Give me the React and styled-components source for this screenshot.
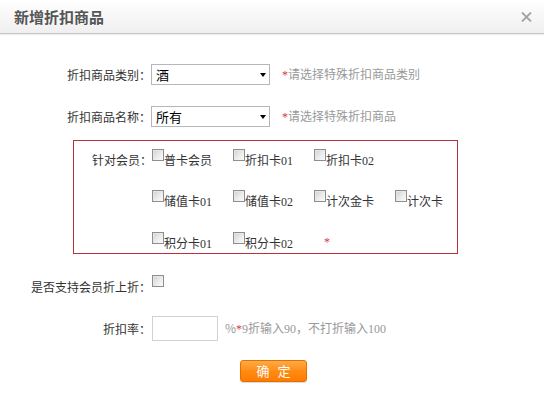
import React from 'react';
import styled, { createGlobalStyle } from 'styled-components';

const GlobalStyle = createGlobalStyle`
  html, body {
    margin: 0;
    padding: 0;
    background: #fff;
  }
  body {
    font-family: "Liberation Serif", "Noto Sans CJK SC", serif;
    font-size: 12px;
    color: #333;
  }
`;

const Dialog = styled.div`
  width: 544px;
  height: 411px;
  background: #fff;
  display: flex;
  flex-direction: column;
`;

const Header = styled.div`
  height: 34px;
  box-sizing: border-box;
  display: flex;
  align-items: center;
  justify-content: space-between;
  padding: 0 12px 0 14px;
  background: linear-gradient(#ffffff, #efefef);
  border-bottom: 1px solid #c8c8c8;
  box-shadow: 0 1px 0 #ededed;
`;

const Title = styled.h1`
  margin: 0;
  font-family: "Noto Sans CJK SC", sans-serif;
  font-size: 15px;
  font-weight: bold;
  line-height: 1;
  color: #555;
`;

const CloseButton = styled.button`
  border: 0;
  padding: 0;
  background: none;
  display: flex;
  cursor: pointer;
`;

const Row = styled.div`
  display: flex;
  align-items: ${p => (p.top ? 'flex-start' : 'center')};
  height: ${p => p.h}px;
  margin-top: ${p => p.mt}px;
`;

const Label = styled.div`
  width: 151px;
  flex-shrink: 0;
  text-align: right;
  font-family: "Noto Sans CJK SC", sans-serif;
  line-height: 14px;
  color: #333;
  padding-top: ${p => p.pt || 0}px;
`;

const SelectBox = styled.div`
  width: 119px;
  height: 21px;
  box-sizing: border-box;
  border: 1px solid #b5b7bd;
  background: #fff;
  display: flex;
  align-items: center;
  justify-content: space-between;
  padding: 0 3px 0 4px;
  font-family: "Noto Sans CJK SC", sans-serif;
  font-size: 13px;
  color: #000;
`;

const Arrow = styled.span`
  width: 0;
  height: 0;
  border-left: 3.5px solid transparent;
  border-right: 3.5px solid transparent;
  border-top: 4px solid #000;
`;

const Hint = styled.span`
  margin-left: ${p => p.ml}px;
  color: #999;
  font-family: "Noto Sans CJK SC", sans-serif;
  line-height: 14px;
`;

const Star = styled.span`
  color: #e0333f;
  font-family: "Liberation Serif", serif;
`;

const Digits = styled.span`
  font-family: "Liberation Serif", serif;
`;

const MemberBox = styled.div`
  margin: 13px 0 0 73px;
  width: 385px;
  height: 114px;
  box-sizing: border-box;
  border: 1px solid #b8323c;
  padding: 8px 0 0 18px;
  display: grid;
  grid-template-columns: 60px repeat(4, 81px);
  grid-template-rows: 41px 42px auto;
  align-items: start;
`;

const MemberLabel = styled.div`
  grid-column: 1;
  grid-row: 1;
  padding-top: 4px;
  line-height: 14px;
  text-align: right;
  font-family: "Noto Sans CJK SC", sans-serif;
  color: #333;
`;

const CheckItem = styled.label`
  display: flex;
  align-items: flex-start;
  grid-column: ${p => p.col};
  grid-row: ${p => p.row};
  color: #333;
  cursor: pointer;
`;

const Box = styled.span`
  width: 12px;
  height: 12px;
  box-sizing: border-box;
  flex-shrink: 0;
  margin-left: ${p => p.ml || 0}px;
  border: 1px solid #8e8e8e;
  background: linear-gradient(135deg, #cfcfcf 0%, #ececec 55%, #fbfbfb 100%);
  box-shadow: inset 1px 1px 0 #e6e6e6;
`;

const ItemText = styled.span`
  padding-top: 5px;
  line-height: 14px;
  font-family: "Liberation Serif", "Noto Sans CJK SC", serif;
`;

const MemberStar = styled.span`
  grid-column: 4;
  grid-row: 3;
  padding: 3px 0 0 10px;
  line-height: 14px;
  color: #e0333f;
`;

const RateInput = styled.input`
  margin: 0 0 0 1px;
  width: 66px;
  height: 25px;
  box-sizing: border-box;
  border: 1px solid #d2d2d2;
  padding: 0 4px;
  outline: none;
`;

const Actions = styled.div`
  display: flex;
  justify-content: center;
  padding-left: 3px;
  margin-top: 19px;
`;

const ConfirmButton = styled.button`
  width: 67px;
  height: 22px;
  box-sizing: border-box;
  padding: 0;
  border: 1px solid #e26f00;
  border-radius: 3px;
  background: linear-gradient(#ffaa45, #ff8a10 55%, #ff7b00);
  box-shadow: 0 1px 1px rgba(0, 0, 0, 0.15);
  color: #fff;
  font-family: "Noto Sans CJK SC", sans-serif;
  font-size: 13px;
  letter-spacing: 8px;
  text-indent: 8px;
  line-height: 20px;
  cursor: pointer;
`;

const memberCards = [
  { name: '普卡会员', col: 2, row: 1 },
  { name: '折扣卡', num: '01', col: 3, row: 1 },
  { name: '折扣卡', num: '02', col: 4, row: 1 },
  { name: '储值卡', num: '01', col: 2, row: 2 },
  { name: '储值卡', num: '02', col: 3, row: 2 },
  { name: '计次金卡', col: 4, row: 2 },
  { name: '计次卡', col: 5, row: 2 },
  { name: '积分卡', num: '01', col: 2, row: 3 },
  { name: '积分卡', num: '02', col: 3, row: 3 },
];

const CloseIcon = () => (
  <svg width="11" height="10" viewBox="0 0 11 10">
    <path d="M1 0.5 L10 9.5 M10 0.5 L1 9.5" stroke="#a3a3a3" strokeWidth="1.8" fill="none" />
  </svg>
);

const App = () => (
  <Dialog>
    <GlobalStyle />
    <Header>
      <Title>新增折扣商品</Title>
      <CloseButton aria-label="关闭">
        <CloseIcon />
      </CloseButton>
    </Header>

    <Row mt={30} h={21}>
      <Label>折扣商品类别：</Label>
      <SelectBox>
        <span>酒</span>
        <Arrow />
      </SelectBox>
      <Hint ml={12}><Star>*</Star>请选择特殊折扣商品类别</Hint>
    </Row>

    <Row mt={21} h={21}>
      <Label>折扣商品名称：</Label>
      <SelectBox>
        <span>所有</span>
        <Arrow />
      </SelectBox>
      <Hint ml={12}><Star>*</Star>请选择特殊折扣商品</Hint>
    </Row>

    <MemberBox>
      <MemberLabel>针对会员：</MemberLabel>
      {memberCards.map((card, i) => (
        <CheckItem key={i} col={card.col} row={card.row}>
          <Box />
          <ItemText>
            {card.name}
            {card.num && <Digits>{card.num}</Digits>}
          </ItemText>
        </CheckItem>
      ))}
      <MemberStar>*</MemberStar>
    </MemberBox>

    <Row mt={21} h={19} top>
      <Label pt={5}>是否支持会员折上折：</Label>
      <Box ml={1} />
    </Row>

    <Row mt={22} h={25}>
      <Label>折扣率：</Label>
      <RateInput type="text" />
      <Hint ml={7}>
        %<Star>*</Star><Digits>9</Digits>折输入<Digits>90</Digits>，不打折输入<Digits>100</Digits>
      </Hint>
    </Row>

    <Actions>
      <ConfirmButton>确定</ConfirmButton>
    </Actions>
  </Dialog>
);

export default App;
